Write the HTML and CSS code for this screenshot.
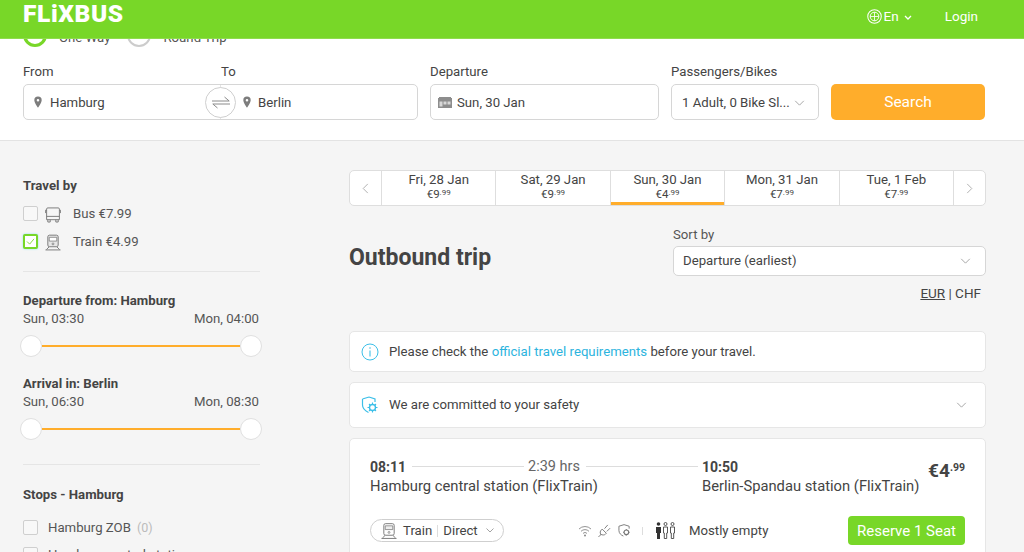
FILE: index.html
```html
<!DOCTYPE html>
<html lang="en">
<head>
<meta charset="utf-8">
<title>FlixBus</title>
<link rel="stylesheet" href="styles.css">
</head>
<body>
<header class="topbar">
  <span class="logo">FL<span class="logo-i">i</span>XBUS</span>
  <nav class="topnav">
    <span class="lang">
      <svg class="globe" viewBox="0 0 16 16"><circle cx="8" cy="8" r="7.2" fill="none" stroke="#fff" stroke-width="1.1"/><circle cx="8" cy="8" r="4.6" fill="none" stroke="#fff"/><path d="M3.4 8h9.2M8 3.4v9.2" stroke="#fff" stroke-width=".9"/></svg>
      En
      <svg class="lang-caret" viewBox="0 0 8 5"><path d="M1 1l3 3 3-3" fill="none" stroke="#fff" stroke-width="1.3"/></svg>
    </span>
    <span class="login">Login</span>
  </nav>
</header>

<section class="search">
  <div class="trip-type">
    <span class="radio radio-on"></span><span class="radio-label">One Way</span>
    <span class="radio"></span><span class="radio-label">Round Trip</span>
  </div>
  <div class="form">
    <div class="route">
      <div class="labels"><label class="lbl">From</label><label class="lbl">To</label></div>
      <div class="box route-box">
        <div class="route-part">
          <svg class="pin" viewBox="0 0 10 14"><path d="M5 0a4.6 4.6 0 0 0-4.6 4.7C.4 8 5 14 5 14s4.6-6 4.6-9.3A4.6 4.6 0 0 0 5 0zm0 6.3a1.6 1.6 0 1 1 0-3.2 1.6 1.6 0 0 1 0 3.2z" fill="#7d7d7d"/></svg>
          <span>Hamburg</span>
        </div>
        <div class="route-part route-part-to">
          <svg class="pin" viewBox="0 0 10 14"><path d="M5 0a4.6 4.6 0 0 0-4.6 4.7C.4 8 5 14 5 14s4.6-6 4.6-9.3A4.6 4.6 0 0 0 5 0zm0 6.3a1.6 1.6 0 1 1 0-3.2 1.6 1.6 0 0 1 0 3.2z" fill="#7d7d7d"/></svg>
          <span>Berlin</span>
        </div>
        <span class="swap">
          <svg viewBox="0 0 18 13"><path d="M0 5h17.200L12.500 1M18 8H.8l4.700 4" fill="none" stroke="#8a8a8a" stroke-width="1"/></svg>
        </span>
      </div>
    </div>
    <div class="field">
      <label class="lbl">Departure</label>
      <div class="box date-box">
        <svg class="cal" viewBox="0 0 14 11"><path d="M0 1h14v10H0z" fill="#8d8d8d"/><path d="M1 0h12v2H1z" fill="#8d8d8d"/><path d="M1.500 4.500h3v5h-3zM5.500 4.500h3v3h-3zM9.500 4.500h3v3h-3z" fill="#d8d8d8"/></svg>
        <span>Sun, 30 Jan</span>
      </div>
    </div>
    <div class="field">
      <label class="lbl">Passengers/Bikes</label>
      <div class="box pax-box">
        <span>1 Adult, 0 Bike Sl...</span>
        <svg class="chev" viewBox="0 0 12 7"><path d="M1 1l5 5 5-5" fill="none" stroke="#999" stroke-width="1"/></svg>
      </div>
    </div>
    <button class="search-btn">Search</button>
  </div>
</section>

<div class="content">
  <aside class="filters">
    <h3 class="f-title">Travel by</h3>
    <div class="mode">
      <span class="check"></span>
      <svg class="mode-icon" viewBox="0 0 17 17"><path d="M3 1.500h11a1.300 1.300 0 0 1 1.300 1.300V14H1.700V2.800A1.300 1.300 0 0 1 3 1.500zM1.700 4H.4v3M15.300 4h1.300v3M1.700 10.500h13.600M3 14v2.500h2.500V14M11.500 14v2.500H14V14" fill="none" stroke="#777" stroke-width="1"/></svg>
      <span>Bus €7.99</span>
    </div>
    <div class="mode">
      <span class="check check-on"><svg viewBox="0 0 10 8"><path d="M1 4l3 3 5-6" fill="none" stroke="#78d728" stroke-width="1"/></svg></span>
      <svg class="mode-icon" viewBox="0 0 17 17"><rect x="3" y=".7" width="11" height="12.300" rx="1.800" fill="#e6e6e6" stroke="#777"/><path d="M4.500 3h8v4h-8z" fill="#fff" stroke="#777" stroke-width=".8"/><circle cx="8.500" cy="10" r="1" fill="none" stroke="#777" stroke-width=".8"/><path d="M4.500 13l-3 3M12.500 13l3 3M.5 16.400h16" fill="none" stroke="#777"/></svg>
      <span>Train €4.99</span>
    </div>
    <hr class="rule rule-top">
    <h3 class="f-title">Departure from: Hamburg</h3>
    <div class="times"><span>Sun, 03:30</span><span>Mon, 04:00</span></div>
    <div class="slider"><span class="knob"></span><span class="track"></span><span class="knob"></span></div>
    <h3 class="f-title f-arrival">Arrival in: Berlin</h3>
    <div class="times"><span>Sun, 06:30</span><span>Mon, 08:30</span></div>
    <div class="slider"><span class="knob"></span><span class="track"></span><span class="knob"></span></div>
    <hr class="rule rule-bottom">
    <h3 class="f-title f-stops">Stops - Hamburg</h3>
    <div class="stop"><span class="check"></span><span>Hamburg ZOB</span><span class="count">(0)</span></div>
    <div class="stop"><span class="check"></span><span>Hamburg central station</span></div>
  </aside>

  <main class="results">
    <div class="dates">
      <div class="date-arrow"><svg viewBox="0 0 7 12"><path d="M6 1L1 6l5 5" fill="none" stroke="#aaa" stroke-width="1"/></svg></div>
      <div class="date"><span>Fri, 28 Jan</span><span class="date-price">€9<sup>.99</sup></span></div>
      <div class="date"><span>Sat, 29 Jan</span><span class="date-price">€9<sup>.99</sup></span></div>
      <div class="date date-active"><span>Sun, 30 Jan</span><span class="date-price">€4<sup>.99</sup></span></div>
      <div class="date"><span>Mon, 31 Jan</span><span class="date-price">€7<sup>.99</sup></span></div>
      <div class="date"><span>Tue, 1 Feb</span><span class="date-price">€7<sup>.99</sup></span></div>
      <div class="date-arrow"><svg viewBox="0 0 7 12"><path d="M1 1l5 5-5 5" fill="none" stroke="#aaa" stroke-width="1"/></svg></div>
    </div>

    <div class="heading">
      <h1 class="title">Outbound trip</h1>
      <div class="sort">
        <label class="sort-lbl">Sort by</label>
        <div class="box sort-box">
          <span>Departure (earliest)</span>
          <svg class="chev" viewBox="0 0 12 7"><path d="M1 1l5 5 5-5" fill="none" stroke="#999" stroke-width="1"/></svg>
        </div>
      </div>
    </div>
    <div class="currency"><span class="cur-on">EUR</span> | CHF</div>

    <div class="notice notice-info">
      <svg class="notice-icon" viewBox="0 0 18 18"><circle cx="9" cy="9" r="8" fill="none" stroke="#3cbfe8" stroke-width="1"/><path d="M9 7.500V13.500" stroke="#3cbfe8" stroke-width="1.100"/><circle cx="9" cy="5" r=".8" fill="#3cbfe8"/></svg>
      <span>Please check the <span class="link">official travel requirements</span> before your travel.</span>
    </div>
    <div class="notice notice-safety">
      <svg class="notice-icon" viewBox="0 0 18 18"><path d="M8 1l6 2v3M1.500 3L8 1M1.500 3v6c0 4 3 6 6 7.500" fill="none" stroke="#3cbfe8" stroke-width="1.200"/><circle cx="11.500" cy="11.500" r="3" fill="none" stroke="#3cbfe8" stroke-width="1.400"/><path d="M11.500 6.500v2M11.500 14.500v2M6.500 11.500h2M14.500 11.500h2M8 8l1.300 1.300M13.700 13.700L15 15M15 8l-1.300 1.300M9.300 13.700L8 15" stroke="#3cbfe8" stroke-width="1.100"/></svg>
      <span>We are committed to your safety</span>
      <svg class="chev notice-chev" viewBox="0 0 12 7"><path d="M1 1l5 5 5-5" fill="none" stroke="#999" stroke-width="1"/></svg>
    </div>

    <article class="card">
      <div class="ride">
        <div class="ride-from">
          <div class="ride-times"><b>08:11</b><i class="dash"></i><span class="dur">2:39 hrs</span><i class="dash"></i></div>
          <div>Hamburg central station (FlixTrain)</div>
        </div>
        <div class="ride-to">
          <div class="ride-times"><b>10:50</b></div>
          <div>Berlin-Spandau station (FlixTrain)</div>
        </div>
        <div class="price">€4<sup>.99</sup></div>
      </div>
      <div class="ride-foot">
        <div class="pill">
          <svg class="pill-train" viewBox="0 0 17 17"><rect x="3" y=".7" width="11" height="12.300" rx="1.800" fill="none" stroke="#777"/><path d="M4.500 3h8v4h-8z" fill="#eee" stroke="#777" stroke-width=".8"/><circle cx="8.500" cy="10" r="1" fill="none" stroke="#777" stroke-width=".8"/><path d="M4.500 13l-3 3M12.500 13l3 3M.5 16.400h16" fill="none" stroke="#777"/></svg>
          <span>Train</span><i class="pill-sep"></i><span>Direct</span>
          <svg class="pill-chev" viewBox="0 0 8 5"><path d="M.5.500L4 4 7.500.500" fill="none" stroke="#999" stroke-width=".9"/></svg>
        </div>
        <div class="amenities">
          <svg class="am-wifi" viewBox="0 0 14 12"><path d="M1 4a8.500 8.500 0 0 1 12 0M3 6.300a5.600 5.600 0 0 1 8 0M5 8.400a2.800 2.800 0 0 1 4 0" fill="none" stroke="#888" stroke-width=".9"/><circle cx="7" cy="10.500" r="1" fill="#888"/></svg>
          <svg class="am-plug" viewBox="0 0 14 14"><path d="M.5 13.500c1 0 1.500-.5 2.500-2.500M3 11C1.800 9.500 2.500 7.500 3.500 6.500l1-1 4.500 4.500-1 1c-1 1-3.500 1.200-5 0zM7 5l3.500-4M9.500 8L13 4.500" fill="none" stroke="#777"/></svg>
          <svg class="am-shield" viewBox="0 0 14 14"><path d="M6.500.7l5.500 1.700v2.600M6.500.7L1 2.400v4.600c0 3 2.300 5 4.800 6" fill="none" stroke="#777"/><circle cx="9" cy="9" r="2.500" fill="none" stroke="#777" stroke-width="1.200"/><path d="M9 5.500v1M9 11.500v1M5.500 9h1M11.500 9h1" stroke="#777"/></svg>
          <i class="am-sep"></i>
          <svg class="people" viewBox="0 0 21 17"><circle cx="3.500" cy="2" r="1.800" fill="#333"/><path d="M1 5h5v6H5v6H2v-6H1z" fill="#333"/><circle cx="10.500" cy="2" r="1.500" fill="none" stroke="#444" stroke-width=".9"/><path d="M8.500 5h4v6h-.8v5.500H9.300V11h-.8z" fill="none" stroke="#444" stroke-width=".9"/><circle cx="17.500" cy="2" r="1.500" fill="none" stroke="#444" stroke-width=".9"/><path d="M15.500 5h4v6h-.8v5.500h-2.400V11h-.8z" fill="none" stroke="#444" stroke-width=".9"/></svg>
          <span>Mostly empty</span>
        </div>
        <button class="reserve">Reserve 1 Seat</button>
      </div>
    </article>
  </main>
</div>
</body>
</html>
```

FILE: styles.css
```css
* { box-sizing: border-box; }
html, body { height: 552px; overflow: hidden; }
body {
  margin: 0;
  position: relative;
  background: #f5f5f5;
  color: #444;
  font-family: Roboto, "Liberation Sans", sans-serif;
  font-size: 13.2px;
  line-height: 16px;
}
h1, h3 { margin: 0; }
svg { display: block; flex: none; }

.topbar {
  position: absolute;
  top: 0; left: 0; right: 0;
  z-index: 5;
  height: 39px;
  padding: 0 46px 0 23px;
  display: flex;
  align-items: center;
  justify-content: space-between;
  background: #78d728;
  border-bottom: 1px solid #8fdc4d;
  color: #fff;
}
.logo {
  font-size: 24.500px;
  font-weight: 900;
  letter-spacing: .6px;
  line-height: 28px;
  position: relative;
  top: -5px;
}
.topnav { display: flex; align-items: center; gap: 33px; font-size: 13.500px; position: relative; top: -3px; }
.lang { display: flex; align-items: center; gap: 2px; }
.globe { width: 15px; height: 15px; }
.lang-caret { width: 8px; height: 5px; margin-left: 3px; margin-top: 2px; }

.search {
  height: 141px;
  padding: 23px 39px 0 23px;
  background: #fff;
  border-bottom: 1px solid #e3e3e3;
}
.trip-type { display: flex; align-items: center; height: 24px; }
.radio {
  width: 24px; height: 24px;
  flex: none;
  border-radius: 50%;
  border: 2px solid #ccc;
  background: #fff;
}
.radio-on { border: 3px solid #78d728; }
.radio-label { margin: 0 17px 0 12px; padding-top: 5px; color: #555; }

.form {
  margin-top: 16px;
  display: grid;
  grid-template-columns: 395px 229px 148px 154px;
  column-gap: 12px;
  align-items: end;
}
.lbl { display: block; height: 21px; padding-top: 1px; color: #444; }
.labels { display: grid; grid-template-columns: 198px 1fr; }
.box {
  height: 36px;
  display: flex;
  align-items: center;
  background: #fff;
  border: 1px solid #d6d6d6;
  border-radius: 5px;
  white-space: nowrap;
}
.date-box, .pax-box { padding-top: 1px; }
.route-box { position: relative; display: grid; grid-template-columns: 196px 1fr; }
.route-part { display: flex; align-items: center; height: 100%; gap: 8px; padding: 1px 0 0 10px; }
.route-part-to { padding-left: 22px; gap: 7px; border-left: 1px solid #e4e4e4; }
.pin { width: 8px; height: 12px; margin-top: -2px; }
.swap {
  position: absolute;
  left: 181px; top: 2px;
  width: 31px; height: 31px;
  display: flex;
  align-items: center;
  justify-content: center;
  background: #fff;
  border: 1px solid #cfcfcf;
  border-radius: 50%;
}
.swap svg { width: 18px; height: 13px; }
.date-box { gap: 5px; padding-left: 7px; }
.cal { width: 14px; height: 11px; }
.pax-box { justify-content: space-between; padding-right: 13px; padding-left: 10px; }
.chev { width: 11px; height: 6px; }
.search-btn {
  height: 36px;
  border: 0;
  border-radius: 5px;
  background: #ffad2b;
  color: #fff;
  font: 400 15.500px Roboto, sans-serif;
}

.content { display: flex; padding: 0 38px 0 23px; }
.filters { width: 237px; margin-right: 89px; padding-top: 37px; flex: none; }
.f-title { font-size: 13.200px; font-weight: 700; color: #444; line-height: 16px; }
.mode { display: flex; align-items: center; height: 15px; margin-top: 12px; color: #555; }
.mode + .mode { margin-top: 13px; }
.mode-icon { width: 16px; height: 17px; margin: 2px 12px 0 7px; }
.check {
  width: 15px; height: 15px; flex: none;
  border: 1.500px solid #cfcfcf;
  border-radius: 2px;
  background: #f8f8f8;
  display: flex;
  align-items: center;
  justify-content: center;
}
.check-on { border: 2px solid #78d728; background: #fff; box-shadow: 0 0 2px #7fdcf0; }
.check-on svg { width: 9px; height: 7px; }
.rule { border: 0; border-top: 1px solid #e5e5e5; margin: 0; }
.rule-top { margin: 22px 0 21px; }
.rule-bottom { margin: 24px 0 22px; }
.times { display: flex; justify-content: space-between; margin: 2px 1px 0 0; color: #555; }
.slider { display: flex; align-items: center; margin: 8px -2px 0 -3px; height: 22px; }
.knob {
  width: 22px; height: 22px;
  flex: none;
  border-radius: 50%;
  background: #fff;
  border: 1px solid #e0e0e0;
}
.track { flex: 1; height: 2px; background: #ffad2b; }
.f-arrival { margin-top: 19px; }
.f-stops { margin-bottom: 17px; }
.stop { display: flex; align-items: center; height: 15px; margin-bottom: 12px; gap: 10px; color: #555; }
.count { color: #bbb; font-size: 12.500px; margin-left: -4px; }

.results { flex: 1; padding-top: 29px; min-width: 0; }
.dates {
  display: flex;
  height: 36px;
  background: #fff;
  border: 1px solid #dedede;
  border-radius: 5px;
  line-height: 15px;
}
.date-arrow { width: 31px; flex: none; display: flex; align-items: center; justify-content: center; }
.date + .date-arrow { width: 32px; border-left: 1px solid #dedede; }
.date-arrow svg { width: 7px; height: 11px; }
.date {
  flex: 1 1 0;
  display: flex;
  flex-direction: column;
  align-items: center;
  padding-top: 1px;
  border-left: 1px solid #dedede;
  color: #444;
}
.date-active { box-shadow: inset 0 -3px 0 #ffad2b; }
.date-price { font-size: 11.500px; line-height: 15px; }
.date-price sup { font-size: 8px; line-height: 0; vertical-align: 3px; }

.heading { display: flex; justify-content: space-between; margin-top: 20px; }
.title { font-size: 23px; line-height: 28px; font-weight: 700; color: #444; margin-top: 18px; }
.sort { width: 313px; }
.sort-lbl { display: block; height: 20px; padding-top: 1px; color: #555; }
.sort-box { height: 30px; justify-content: space-between; padding: 0 14px 0 9px; }
.currency { margin-top: 8px; height: 17px; padding: 1px 5px 0 0; text-align: right; font-size: 13.500px; }
.cur-on { text-decoration: underline; }

.notice {
  display: flex;
  align-items: center;
  background: #fff;
  border: 1px solid #e6e6e6;
  border-radius: 5px;
  padding: 0 18px 0 11px;
}
.notice-info { height: 41px; margin-top: 30px; }
.notice-safety { height: 46px; margin-top: 10px; }
.notice-icon { width: 18px; height: 18px; margin-right: 10px; }
.notice-chev { margin-left: auto; }
.link { color: #2db4de; }

.card {
  height: 200px;
  margin-top: 10px;
  padding: 17px 20px 0;
  background: #fff;
  border: 1px solid #e6e6e6;
  border-radius: 5px;
}
.ride { display: flex; font-size: 14.750px; line-height: 18px; }
.ride-from { width: 332px; flex: none; }
.ride-times { display: flex; align-items: center; height: 21px; font-size: 14px; }
.ride-times b { font-weight: 700; }
.dash { flex: 1; height: 1px; background: #ddd; margin: 0 4px 0 6px; }
.dur { color: #666; font-size: 14.500px; }
.ride-to { flex: 1; white-space: nowrap; }
.price { font-size: 19px; font-weight: 700; line-height: 24px; margin-top: 3px; }
.price sup { font-size: 10.500px; line-height: 0; vertical-align: 6px; }
.ride-foot { display: flex; align-items: center; margin-top: 21px; height: 29px; }
.pill {
  display: flex;
  align-items: center;
  width: 134px; height: 23px;
  padding-left: 10px;
  border: 1px solid #cfcfcf;
  border-radius: 12px;
}
.pill-train { width: 16px; height: 16px; margin-right: 6px; }
.pill-sep { width: 1px; height: 12px; background: #ddd; margin: 0 5px 0 5px; }
.pill-chev { width: 8px; height: 5px; margin-left: 8px; }
.amenities { display: flex; align-items: center; margin-left: 74px; }
.am-wifi { width: 14px; height: 12px; }
.am-plug { width: 13px; height: 13px; margin-left: 6px; }
.am-shield { width: 13px; height: 13px; margin-left: 7px; }
.am-sep { width: 1px; height: 8px; background: #ddd; margin: 0 12px 0 11px; }
.people { width: 21px; height: 17px; margin-right: 13px; }
.reserve {
  margin-left: auto;
  width: 117px; height: 29px;
  border: 0;
  border-radius: 4px;
  background: #78d728;
  color: #fff;
  font: 400 15px Roboto, sans-serif;
}
```
